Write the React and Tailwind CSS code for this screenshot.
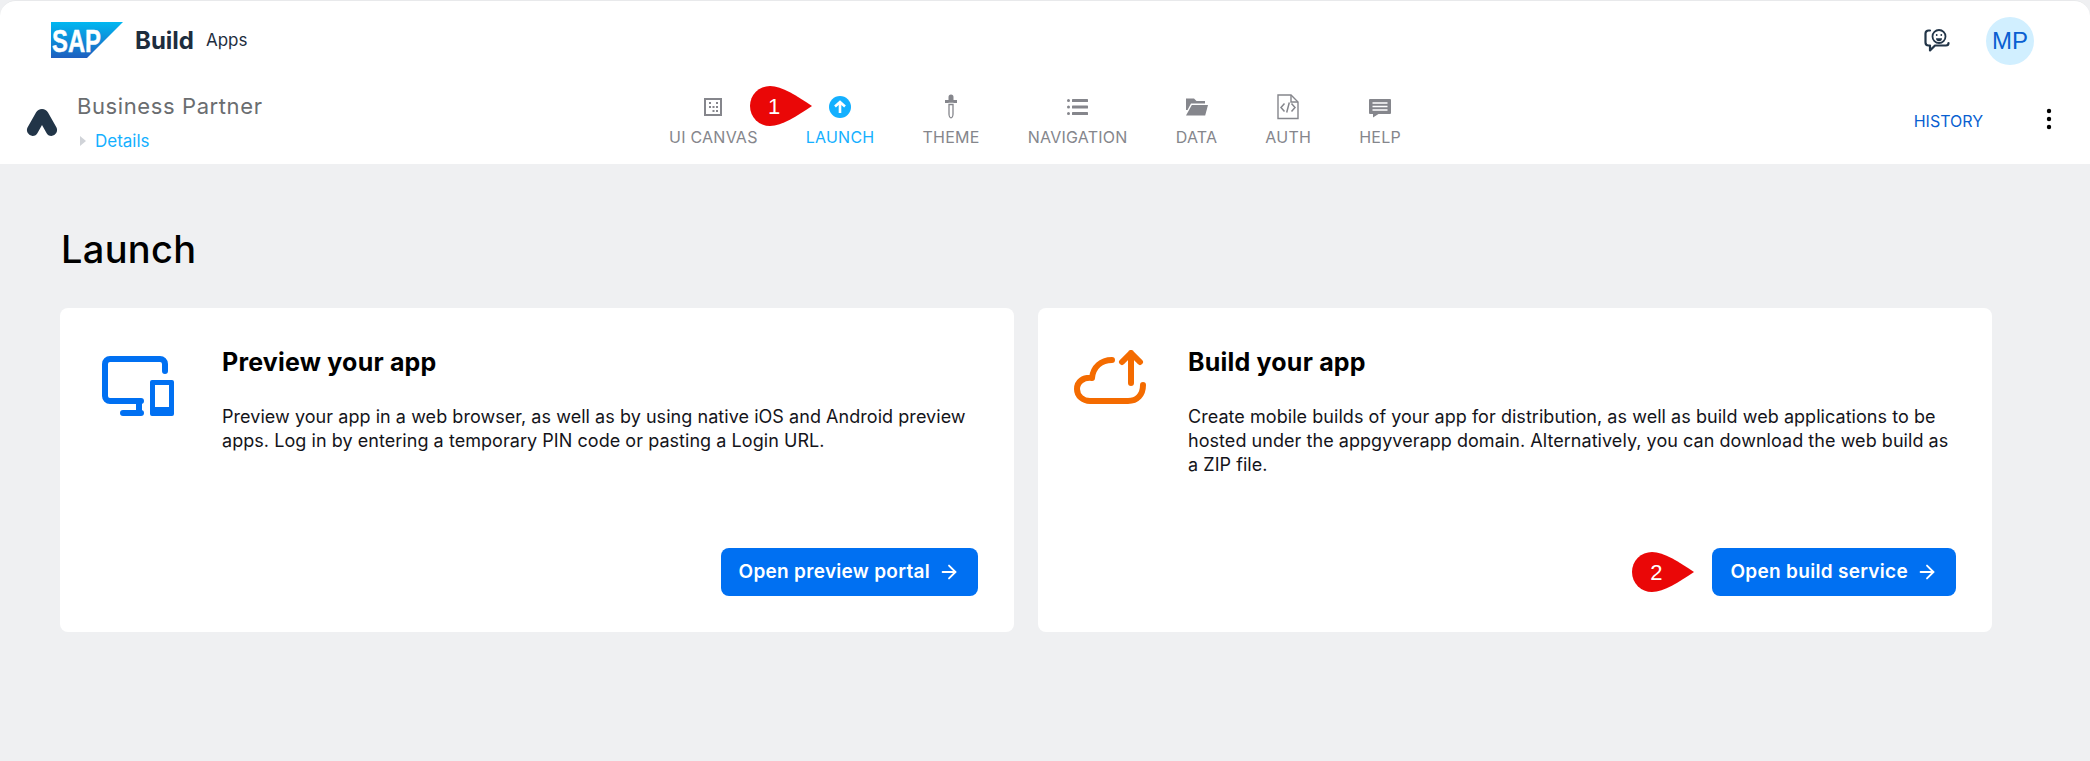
import React from 'react';
import { ArrowRight } from 'lucide-react';

const Teardrop = ({ label, className }) => (
  <div className={`absolute w-[62px] h-[40px] ${className}`}>
    <svg width="62" height="40" viewBox="0 0 62 40" className="block">
      <path d="M20 0C32 0 47 10 62 20C47 30 32 40 20 40A20 20 0 0 1 20 0Z" fill="#ea0707" />
    </svg>
    <span className="absolute left-[4px] top-0 w-[40px] h-[40px] flex items-center justify-center text-white text-[22px] font-['Liberation_Sans',sans-serif]">
      {label}
    </span>
  </div>
);

const CanvasIcon = () => (
  <svg width="24" height="24" viewBox="0 0 24 24" fill="#85868c">
    <path fillRule="evenodd" d="M3 3h18v18H3zM5 5v14h14V5z" />
    <rect x="8" y="7" width="2" height="2" /><rect x="15" y="7" width="2" height="2" />
    <rect x="8" y="11" width="2" height="2" /><rect x="11.5" y="11" width="2" height="2" /><rect x="15" y="11" width="2" height="2" />
    <rect x="11.5" y="15" width="2" height="2" /><rect x="15" y="15" width="2" height="2" />
  </svg>
);

const LaunchIcon = () => (
  <svg width="24" height="24" viewBox="0 0 24 24">
    <circle cx="12" cy="12" r="11" fill="#14b0ff" />
    <path d="M12 18V7M7 11.5L12 7l5 4.5" fill="none" stroke="#fff" strokeWidth="2.6" />
  </svg>
);

const ThemeIcon = () => (
  <svg width="24" height="26" viewBox="0 0 24 26" fill="#85868c">
    <path d="M9.5 3a2.5 2.5 0 0 1 5 0v3H18v3h-3.5v-.2h-5V9H6V6h3.5z" />
    <path d="M10 10.5h4V20c0 1.4-.8 3.8-2 3.8S10 21.400 10 20z" fill="none" stroke="#85868c" strokeWidth="1.3" />
  </svg>
);

const NavIcon = () => (
  <svg width="24" height="24" viewBox="0 0 24 24" fill="#85868c">
    <rect x="1" y="4" width="3" height="3" rx="1.5" /><rect x="1" y="10.500" width="3" height="3" rx="1.5" /><rect x="1" y="17" width="3" height="3" rx="1.5" />
    <rect x="6" y="4" width="16" height="3" rx=".6" /><rect x="6" y="10.500" width="16" height="3" rx=".6" /><rect x="6" y="17" width="16" height="3" rx=".6" />
  </svg>
);

const FolderIcon = () => (
  <svg width="24" height="24" viewBox="0 0 24 24" fill="#85868c">
    <path d="M1 3.500h8l2.500 2.500H20v2.500H6L2.500 15H1z" />
    <path d="M6.800 10H23l-2.800 10.500H1z" />
  </svg>
);

const AuthIcon = () => (
  <svg width="24" height="26" viewBox="0 0 24 26" fill="none" stroke="#85868c" strokeWidth="1.400">
    <path d="M2 1h13l7 7v16.500H2z" />
    <path d="M15 1v7h7" />
    <path d="M8.500 9.500L5 13.500l3.500 4M15.500 9.500l3.500 4-3.500 4M13.300 8.500l-2.600 10" strokeWidth="1.500" />
  </svg>
);

const HelpIcon = () => (
  <svg width="24" height="24" viewBox="0 0 24 24">
    <path d="M2 4h20a1 1 0 0 1 1 1v13a1 1 0 0 1-1 1H10.500L5 22.500V19H2a1 1 0 0 1-1-1V5a1 1 0 0 1 1-1z" fill="#85868c" />
    <path d="M4.500 8h15M4.500 11.500h15M4.500 15h15" stroke="#fff" strokeWidth="1.400" />
  </svg>
);

const navItems = [
  { label: 'UI CANVAS', icon: <CanvasIcon /> },
  { label: 'LAUNCH', icon: <LaunchIcon />, active: true },
  { label: 'THEME', icon: <ThemeIcon /> },
  { label: 'NAVIGATION', icon: <NavIcon /> },
  { label: 'DATA', icon: <FolderIcon /> },
  { label: 'AUTH', icon: <AuthIcon /> },
  { label: 'HELP', icon: <HelpIcon /> },
];

const SapLogo = () => (
  <svg width="72" height="36" viewBox="0 0 72 36" className="block">
    <defs>
      <linearGradient id="sapGrad" x1="0" y1="0" x2="0" y2="1">
        <stop offset="0" stopColor="#00b8f1" />
        <stop offset="1" stopColor="#1e5fbf" />
      </linearGradient>
    </defs>
    <path d="M0 0H72L36 36H0Z" fill="url(#sapGrad)" />
    <text x="1" y="30" fill="#fff" fontFamily="'Liberation Sans', sans-serif" fontWeight="700" fontSize="31" textLength="49" lengthAdjust="spacingAndGlyphs" stroke="#fff" strokeWidth=".5">SAP</text>
  </svg>
);

const AppMark = () => (
  <svg width="34" height="30" viewBox="0 0 34 30" className="block">
    <path d="M17 2a7 7 0 0 1 6 3.500l8.500 15a6 6 0 0 1-5 8.500c-2.500 0-4-1.300-5-3L17 18l-4.500 8c-1 1.700-2.500 3-5 3a6 6 0 0 1-5-8.500L11 5.500A7 7 0 0 1 17 2z" fill="#223548" />
  </svg>
);

const FeedbackIcon = () => (
  <svg width="26" height="26" viewBox="0 0 26 26" fill="none" stroke="#223548" strokeWidth="2.200" strokeLinecap="round" strokeLinejoin="round">
    <circle cx="15" cy="8.500" r="6.500" strokeWidth="1.800" />
    <circle cx="12.700" cy="7" r=".9" fill="#223548" stroke="none" />
    <circle cx="17.300" cy="7" r=".9" fill="#223548" stroke="none" />
    <path d="M12 10.200h6a3 3 0 0 1-6 0z" fill="#223548" stroke="none" />
    <path d="M6 2.500H4.500A3 3 0 0 0 1.500 5.500v9a3 3 0 0 0 3 3H6v5l5-5h11a2.500 2.500 0 0 0 2.500-2.500" />
  </svg>
);

const KebabIcon = () => (
  <svg width="8" height="22" viewBox="0 0 8 22" fill="#000" className="block">
    <circle cx="4" cy="3" r="2.200" /><circle cx="4" cy="11" r="2.200" /><circle cx="4" cy="19" r="2.200" />
  </svg>
);

const DevicesIcon = () => (
  <svg width="72" height="60" viewBox="0 0 72 60" fill="none" stroke="#0070f2" strokeWidth="6" strokeLinecap="round" strokeLinejoin="round">
    <path d="M63 15V8a5 5 0 0 0-5-5H8a5 5 0 0 0-5 5v32a5 5 0 0 0 5 5h31" />
    <path d="M37 45v12M21 57h18" />
    <path
      fillRule="evenodd"
      stroke="none"
      fill="#0070f2"
      d="M50 24h20a2 2 0 0 1 2 2v32a2 2 0 0 1-2 2H50a2 2 0 0 1-2-2V26a2 2 0 0 1 2-2zM53 29v22h14V29z"
    />
  </svg>
);

const CloudIcon = () => (
  <svg width="72" height="56" viewBox="0 0 72 56" fill="none" stroke="#f46b00" strokeWidth="6" strokeLinecap="round" strokeLinejoin="round">
    <path d="M38 10C27 10 19 17 18 28C9 27 3 32 3 39C3 46 9 51 16 51H54C63 51 69 45 69 35" />
    <path d="M57 33V3M48 12L57 3l9 9" />
  </svg>
);

const LaunchCard = ({ icon, iconClass, title, text, cta, badge }) => (
  <div className="w-[954px] h-[324px] bg-white rounded-lg flex">
    <div className={iconClass}>{icon}</div>
    <div className="flex-1 flex flex-col pt-[38px] pr-[36px] pb-[36px]">
      <h2 className="text-[25px] leading-[32px] font-bold tracking-[0.2px] text-black">{title}</h2>
      <p className="mt-[27px] text-[18px] leading-[24px] tracking-[0.05px] text-[#14141a]">{text}</p>
      <div className="mt-auto flex justify-end">
        <div className="relative">
          {badge}
          <button className="h-[48px] px-[18px] rounded-lg bg-[#0070f2] text-white text-[19px] font-semibold tracking-[0.3px] flex items-center gap-[8px]">
            {cta}
            <ArrowRight className="w-[22px] h-[22px]" strokeWidth={2} />
          </button>
        </div>
      </div>
    </div>
  </div>
);

export default function App() {
  return (
    <div className="w-[2090px] h-[761px] overflow-hidden bg-[#eff0f2] font-['Inter',sans-serif]">
      <header className="bg-white rounded-t-2xl border-t border-[#e8e9eb] h-[164px]">
        <div className="h-[79px] flex items-center pl-[51px] pr-[56px]">
          <div className="-mt-[1px]"><SapLogo /></div>
          <span className="ml-[12px] text-[24px] font-bold text-[#1d2d3e]">Build</span>
          <span className="ml-[12px] text-[17px] text-[#1d2d3e]">Apps</span>
          <div className="ml-auto flex items-center gap-[36px]">
            <FeedbackIcon />
            <div className="w-[48px] h-[48px] rounded-full bg-[#d1efff] text-[#0a5fd1] text-[24px] flex items-center justify-center font-['Liberation_Sans',sans-serif]">MP</div>
          </div>
        </div>
        <div className="h-[84px] flex items-center">
          <div className="w-[669px] flex items-center pl-[25px] shrink-0">
            <AppMark />
            <div className="ml-[18px] -mt-[2px]">
              <div className="text-[22px] leading-[28px] tracking-[0.6px] text-[#6a6d70]">Business Partner</div>
              <div className="mt-[11px] flex items-center text-[17px] leading-[20px] text-[#14b0ff]">
                <span className="w-0 h-0 ml-[3px] mr-[9px] border-y-[5px] border-y-transparent border-l-[6px] border-l-[#d0d3d8]" />
                Details
              </div>
            </div>
          </div>
          <nav className="relative flex gap-[48px] -mt-[3px]">
            {navItems.map((item) => (
              <div key={item.label} className="flex flex-col items-center">
                <div className="h-[26px] flex items-center justify-center">{item.icon}</div>
                <span className={`mt-[7px] text-[16px] leading-[20px] tracking-[0.25px] ${item.active ? 'text-[#14b0ff]' : 'text-[#85868c]'}`}>{item.label}</span>
              </div>
            ))}
            <Teardrop label="1" className="left-[81px] top-[-8px]" />
          </nav>
          <div className="ml-auto flex items-center pr-[37px]">
            <span className="text-[16px] text-[#0a5fd1] -mt-[2px]">HISTORY</span>
            <div className="ml-[62px] -mt-[6px]"><KebabIcon /></div>
          </div>
        </div>
      </header>
      <main className="pl-[60px] pr-[98px] pt-[60px]">
        <h1 className="ml-[1px] text-[38px] leading-[50px] font-medium tracking-[0.3px] text-black">Launch</h1>
        <div className="mt-[34px] flex gap-[24px]">
          <LaunchCard
            icon={<DevicesIcon />}
            iconClass="w-[162px] pl-[42px] pt-[48px] shrink-0"
            title="Preview your app"
            text="Preview your app in a web browser, as well as by using native iOS and Android preview apps. Log in by entering a temporary PIN code or pasting a Login URL."
            cta="Open preview portal"
          />
          <LaunchCard
            icon={<CloudIcon />}
            iconClass="w-[150px] pl-[36px] pt-[42px] shrink-0"
            title="Build your app"
            text="Create mobile builds of your app for distribution, as well as build web applications to be hosted under the appgyverapp domain. Alternatively, you can download the web build as a ZIP file."
            cta="Open build service"
            badge={<Teardrop label="2" className="left-[-80px] top-[4px]" />}
          />
        </div>
      </main>
    </div>
  );
}
